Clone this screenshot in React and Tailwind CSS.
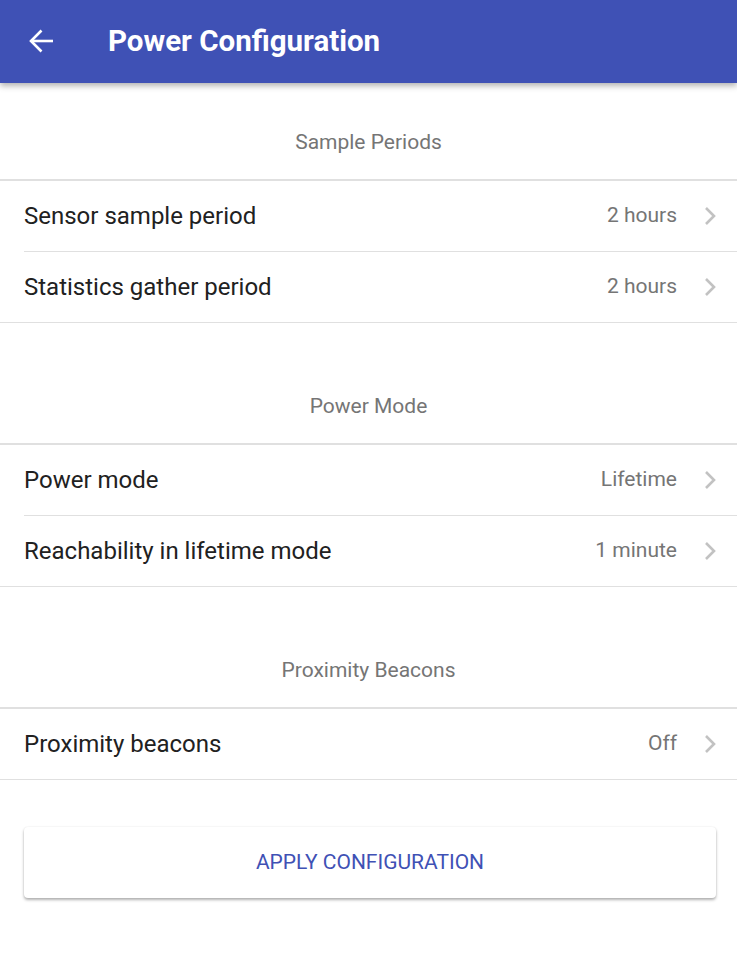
import React from "react";

const Chevron = () => (
  <svg width="14" height="20" viewBox="0 0 14 20" className="ml-[26px] shrink-0">
    <path d="M3 2 L11 10 L3 18" fill="none" stroke="#c2c2c2" strokeWidth="2.6" />
  </svg>
);

const Row = ({ label, value, last }) => (
  <div className="flex flex-col">
    <div className="flex items-center h-[70px] pl-6 pr-[20px]">
      <div className="flex-1 text-[24px] text-[#212121]">{label}</div>
      <div className="text-[21px] text-[#757575]">{value}</div>
      <Chevron />
    </div>
    {last ? (
      <div className="h-px bg-[#e0e0e0]" />
    ) : (
      <div className="h-px bg-[#e0e0e0] ml-6" />
    )}
  </div>
);

const Section = ({ title, rows, first }) => (
  <div className={first ? "mt-[23px]" : "mt-[47px]"}>
    <div className="h-[73px] flex items-center justify-center text-[21px] text-[#757575]">
      {title}
    </div>
    <div className="h-[2px] bg-[#e0e0e0]" />
    {rows.map((r, i) => (
      <Row key={r[0]} label={r[0]} value={r[1]} last={i === rows.length - 1} />
    ))}
  </div>
);

export default function App() {
  return (
    <div
      className="w-[737px] h-[961px] bg-white overflow-hidden"
      style={{ fontFamily: "Roboto, 'Noto Sans', sans-serif" }}
    >
      <div className="relative z-10 h-[83px] bg-[#3f51b5] flex items-center shadow-[0_3px_6px_rgba(0,0,0,0.3)]">
        <svg width="26" height="26" viewBox="0 0 26 26" className="ml-[29px]">
          <path d="M2 12 H24" fill="none" stroke="#fff" strokeWidth="2.6" />
          <path d="M12.5 1.5 L2 12 L12.5 22.5" fill="none" stroke="#fff" strokeWidth="2.6" />
        </svg>
        <div className="ml-[53px] text-white text-[29.5px] font-bold">
          Power Configuration
        </div>
      </div>
      <Section
        first
        title="Sample Periods"
        rows={[
          ["Sensor sample period", "2 hours"],
          ["Statistics gather period", "2 hours"],
        ]}
      />
      <Section
        title="Power Mode"
        rows={[
          ["Power mode", "Lifetime"],
          ["Reachability in lifetime mode", "1 minute"],
        ]}
      />
      <Section title="Proximity Beacons" rows={[["Proximity beacons", "Off"]]} />
      <div className="pl-6 pr-[21px] mt-[47px]">
        <div className="h-[71px] rounded-[4px] bg-white flex items-center justify-center text-[21px] text-[#3f51b5] uppercase shadow-[0_2px_3px_rgba(0,0,0,0.3),0_0_2px_rgba(0,0,0,0.08)]">
          Apply configuration
        </div>
      </div>
    </div>
  );
}
